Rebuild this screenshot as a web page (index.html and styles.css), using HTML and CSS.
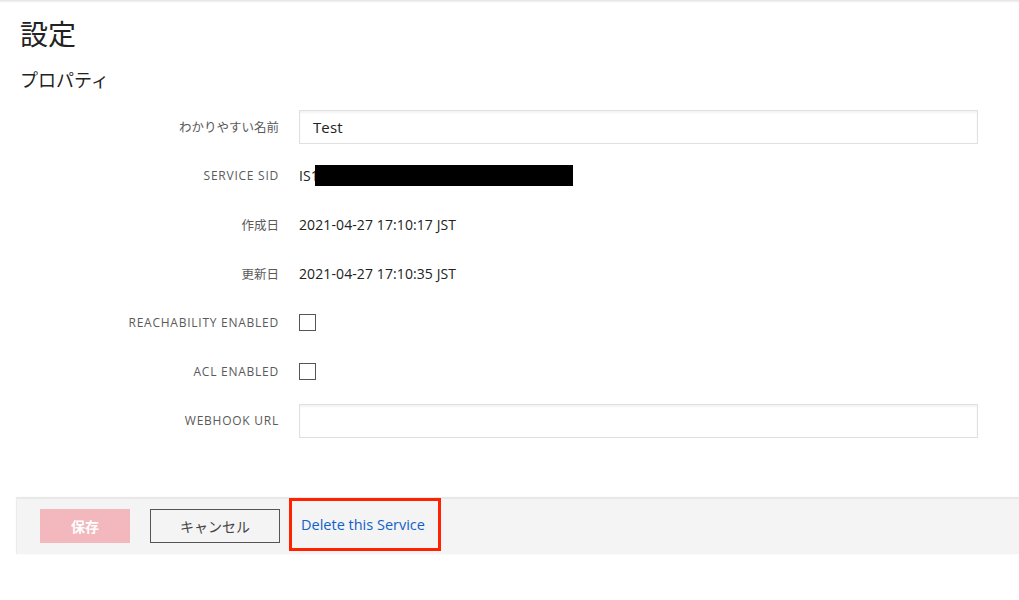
FILE: index.html
```html
<!DOCTYPE html>
<html lang="ja">
<head>
<meta charset="utf-8">
<title>設定</title>
<link rel="stylesheet" href="styles.css">
</head>
<body>
<div class="topline"></div>
<main class="page">
  <h1 class="title">設定</h1>
  <h2 class="subtitle">プロパティ</h2>
  <div class="form">
    <div class="row">
      <div class="label">わかりやすい名前</div>
      <div class="value"><div class="input">Test</div></div>
    </div>
    <div class="row">
      <div class="label caps">SERVICE SID</div>
      <div class="value"><span>IS1</span><span class="redact"></span></div>
    </div>
    <div class="row">
      <div class="label">作成日</div>
      <div class="value">2021-04-27 17:10:17 JST</div>
    </div>
    <div class="row">
      <div class="label">更新日</div>
      <div class="value">2021-04-27 17:10:35 JST</div>
    </div>
    <div class="row">
      <div class="label caps">REACHABILITY ENABLED</div>
      <div class="value"><span class="checkbox"></span></div>
    </div>
    <div class="row">
      <div class="label caps">ACL ENABLED</div>
      <div class="value"><span class="checkbox"></span></div>
    </div>
    <div class="row">
      <div class="label caps">WEBHOOK URL</div>
      <div class="value"><div class="input"></div></div>
    </div>
  </div>
</main>
<footer class="actions">
  <button class="btn btn-save">保存</button>
  <button class="btn btn-cancel">キャンセル</button>
  <div class="highlight"><a class="delete" href="#">Delete this Service</a></div>
</footer>
</body>
</html>
```
FILE: styles.css
```css
* { box-sizing: border-box; }
html, body { margin: 0; padding: 0; background: #fff; }
body {
  font-family: "Open Sans", "Noto Sans CJK JP", sans-serif;
  color: #222;
  width: 1019px;
  height: 600px;
  overflow: hidden;
}
.topline {
  height: 3px;
  background: linear-gradient(#e2e2e2, #f4f4f4 60%, #fff);
}
.page { padding: 0 20px; }
.title {
  margin: 0;
  padding-top: 10px;
  font-family: "Noto Sans CJK JP", sans-serif;
  font-size: 28px;
  font-weight: 400;
  line-height: 40px;
  color: #222;
}
.subtitle {
  margin: 13px 0 0;
  font-family: "Noto Sans CJK JP", sans-serif;
  font-size: 18px;
  font-weight: 400;
  line-height: 26px;
  color: #222;
}
.form { margin-top: 10px; }
.row {
  display: grid;
  grid-template-columns: 259px 679px;
  column-gap: 20px;
  align-items: center;
  height: 49px;
}
.label {
  text-align: right;
  font-family: "Noto Sans CJK JP", sans-serif;
  font-size: 12.5px;
  color: #5a5a5a;
}
.label.caps {
  font-family: "Open Sans", sans-serif;
  font-size: 12px;
  letter-spacing: 0.75px;
  color: #5a5a5a;
}
.value {
  display: flex;
  align-items: center;
  font-size: 14px;
  letter-spacing: 0.1px;
  color: #222;
}
.input {
  width: 679px;
  height: 34px;
  border: 1px solid #e0e0e0;
  box-shadow: inset 0 2px 2px #f3f3f3;
  padding: 0 13px;
  display: flex;
  align-items: center;
  font-size: 15px;
  color: #222;
  background: #fff;
}
.redact {
  display: inline-block;
  width: 258px;
  height: 21px;
  margin-left: -4px;
  background: #000;
}
.checkbox {
  display: inline-block;
  width: 17px;
  height: 17px;
  border: 1px solid #555;
  background: #fff;
}
.actions {
  margin: 52px 0 0 17px;
  height: 57px;
  background: #f4f4f4;
  border-top: 2px solid #e8e8e8;
  box-shadow: -1px 0 1px #ececec;
  display: flex;
  align-items: flex-start;
  padding: 10px 0 0 23px;
}
.btn {
  height: 34px;
  font-family: "Noto Sans CJK JP", sans-serif;
  font-size: 14px;
  cursor: pointer;
}
.btn-save {
  width: 90px;
  background: #f2b8bd;
  color: #fff;
  border: none;
  font-weight: 700;
}
.btn-cancel {
  width: 130px;
  margin-left: 20px;
  background: transparent;
  border: 1px solid #555;
  color: #444;
  font-weight: 400;
}
.highlight {
  margin: -11px 0 0 9px;
  width: 152px;
  height: 53px;
  border: 3px solid #ff2200;
  display: flex;
  align-items: center;
  padding-left: 9px;
}
.delete {
  color: #0f62c9;
  text-decoration: none;
  font-family: "Open Sans", sans-serif;
  font-size: 14.5px;
}
```
